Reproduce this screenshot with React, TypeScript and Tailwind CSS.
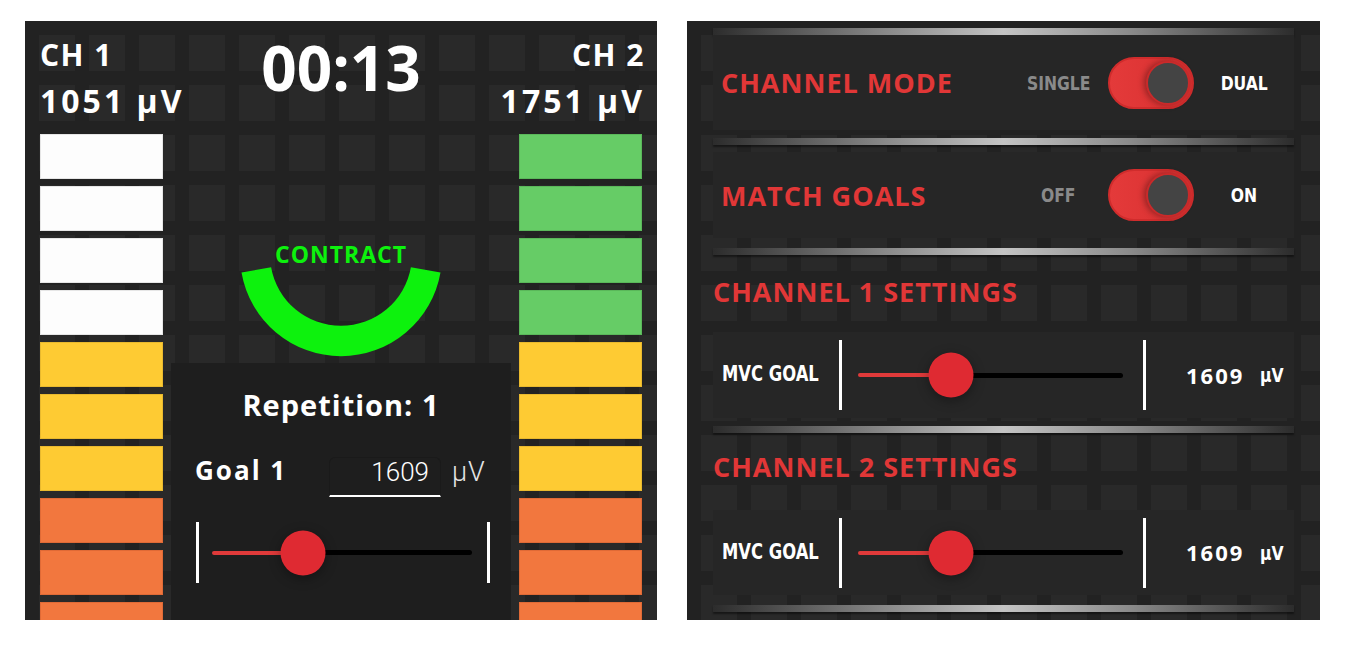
import React from 'react'

const pattern =
  'bg-[#222] bg-[linear-gradient(90deg,#222_14px,transparent_14px),linear-gradient(#222_14px,#292929_14px)] bg-[length:50px_50px]'

const futura = "font-['Open_Sans',sans-serif] font-bold"
const narrow = "inline-block whitespace-nowrap font-['DejaVu_Sans',sans-serif] font-bold scale-x-[0.78]"

const leftBars = [
  'bg-[#fdfdfd] border-[#e6e6e6]',
  'bg-[#fdfdfd] border-[#e6e6e6]',
  'bg-[#fdfdfd] border-[#e6e6e6]',
  'bg-[#fdfdfd] border-[#e6e6e6]',
  'bg-[#fecb33] border-[#e9b92e]',
  'bg-[#fecb33] border-[#e9b92e]',
  'bg-[#fecb33] border-[#e9b92e]',
  'bg-[#f2773e] border-[#e06a36]',
  'bg-[#f2773e] border-[#e06a36]',
  'bg-[#f2773e] border-[#e06a36]',
]

const rightBars = [
  'bg-[#66cc66] border-[#5ab85a]',
  'bg-[#66cc66] border-[#5ab85a]',
  'bg-[#66cc66] border-[#5ab85a]',
  'bg-[#66cc66] border-[#5ab85a]',
  'bg-[#fecb33] border-[#e9b92e]',
  'bg-[#fecb33] border-[#e9b92e]',
  'bg-[#fecb33] border-[#e9b92e]',
  'bg-[#f2773e] border-[#e06a36]',
  'bg-[#f2773e] border-[#e06a36]',
  'bg-[#f2773e] border-[#e06a36]',
]

function Bars({ colors }: { colors: string[] }) {
  return (
    <div className="flex w-[123px] shrink-0 flex-col gap-[7px]">
      {colors.map((c, i) => (
        <div key={i} className={`h-[45px] shrink-0 border ${c}`} />
      ))}
    </div>
  )
}

function Track({ className }: { className: string }) {
  return (
    <div className={`relative flex items-center ${className}`}>
      <div className="h-[4px] w-[35%] rounded-l-full bg-[#e03a3a]" />
      <div className="h-[5px] flex-1 rounded-r-full bg-black" />
      <div className="absolute left-[35%] top-1/2 h-[45px] w-[45px] -translate-x-1/2 -translate-y-1/2 rounded-full bg-[#df2a32] shadow-[0_3px_12px_rgba(0,0,0,0.35)]" />
    </div>
  )
}

function Separator() {
  return (
    <div className="h-[7px] shrink-0 bg-[linear-gradient(90deg,#2c2c2c,#8a8a8a_30%,#c4c4c4_50%,#8a8a8a_72%,#2c2c2c)] shadow-[0_2px_2px_rgba(0,0,0,0.45)]" />
  )
}

function Toggle() {
  return (
    <div className="mx-[10px] flex h-[52px] w-[86px] shrink-0 items-center justify-end rounded-full border-2 border-[#d02c2c] bg-[linear-gradient(90deg,#e43a3a,#d83030)] p-[2px]">
      <div className="h-[44px] w-[44px] rounded-full border-2 border-[#c92a2a] bg-[#444] shadow-[-2px_0_6px_rgba(0,0,0,0.35)]" />
    </div>
  )
}

function ToggleRow({ title, off, on, className }: { title: string; off: string; on: string; className: string }) {
  return (
    <div className={`flex items-center bg-[#262626] pl-[8px] pr-[10px] ${className}`}>
      <span className={`${futura} flex-1 text-[27px] leading-none tracking-[1px] text-[#e13737]`}>{title}</span>
      <span className="w-[80px] text-center">
        <span className={`${narrow} text-[20px] text-[#8a8a8a]`}>{off}</span>
      </span>
      <Toggle />
      <span className="w-[80px] text-center">
        <span className={`${narrow} text-[20px] text-white`}>{on}</span>
      </span>
    </div>
  )
}

function GoalRow({ className }: { className: string }) {
  return (
    <div className={`flex items-center bg-[#262626] pl-[9px] ${className}`}>
      <span className="w-[117px] shrink-0">
        <span className={`${narrow} origin-left text-[21px] text-white`}>MVC GOAL</span>
      </span>
      <div className="h-[70px] w-[3px] bg-white" />
      <Track className="ml-[16px] w-[265px]" />
      <div className="ml-[20px] h-[70px] w-[3px] bg-white" />
      <span className={`${futura} ml-[40px] text-[22px] tracking-[2px] text-white`}>1609</span>
      <span className={`${narrow} ml-[16px] origin-left text-[20px] text-white`}>µV</span>
    </div>
  )
}

export default function App() {
  return (
    <div className="flex h-[647px] w-[1345px] gap-[30px] bg-white pl-[25px] pt-[21px]">
      {/* Session panel */}
      <div className={`h-[599px] w-[632px] shrink-0 overflow-hidden px-[15px] pt-[11px] text-white ${pattern}`}>
        <div className={`${futura} grid h-[102px] grid-cols-[1fr_auto_1fr]`}>
          <div className="leading-[46px]">
            <div className="text-[30px] tracking-[1.5px]">CH 1</div>
            <div className="text-[32px] tracking-[3px]">1051 µV</div>
          </div>
          <div className="mt-[4px] text-[62px] leading-none">00:13</div>
          <div className="mr-[-3px] text-right leading-[46px]">
            <div className="text-[30px] tracking-[1.5px]">CH 2</div>
            <div className="text-[32px] tracking-[3px]">1751 µV</div>
          </div>
        </div>

        <div className="flex">
          <Bars colors={leftBars} />
          <div className="flex flex-1 flex-col items-center px-[8px]">
            <div className={`${futura} mt-[109px] text-[23px] leading-none tracking-[1px] text-[#0df20d]`}>CONTRACT</div>
            <svg width="204" height="106" viewBox="0 0 204 106" className="mt-[-15px] shrink-0">
              <path
                d="M 201.5 21.5 A 101 101 0 0 1 2.5 21.5 L 32.1 16.3 A 71 71 0 0 0 171.9 16.3 Z"
                fill="#0df20d"
              />
            </svg>
            <div className="mt-[6px] h-[300px] w-full shrink-0 bg-[#1e1e1e] pt-[27px]">
              <div className={`${futura} text-center text-[29px] leading-none tracking-[1px]`}>Repetition: 1</div>
              <div className="mt-[38px] flex items-start pl-[24px]">
                <span className={`${futura} w-[134px] text-[26px] leading-none tracking-[2px]`}>Goal 1</span>
                <div className="h-[40px] w-[112px] rounded-t-[6px] border border-b-2 border-[#1a1a1a] border-b-white pr-[11px] pt-[1px] text-right font-['Roboto',sans-serif] text-[26px] font-light leading-none">
                  1609
                </div>
                <span className="ml-[11px] pt-[2px] font-['Roboto',sans-serif] text-[27px] font-light leading-none tracking-[1px] text-[#e5e5e5]">µV</span>
              </div>
              <div className="mt-[25px] flex items-center pl-[25px]">
                <div className="h-[61px] w-[3px] bg-white" />
                <Track className="ml-[13px] w-[260px]" />
                <div className="ml-[15px] h-[61px] w-[3px] bg-white" />
              </div>
            </div>
          </div>
          <Bars colors={rightBars} />
        </div>
      </div>

      {/* Settings panel */}
      <div className={`flex h-[599px] w-[633px] shrink-0 flex-col overflow-hidden px-[26px] pt-[7px] ${pattern}`}>
        <Separator />
        <ToggleRow title="CHANNEL MODE" off="SINGLE" on="DUAL" className="h-[95px]" />
        <div className="mt-[8px]">
          <Separator />
        </div>
        <ToggleRow title="MATCH GOALS" off="OFF" on="ON" className="mt-[7px] h-[86px]" />
        <div className="mt-[10px]">
          <Separator />
        </div>
        <div className={`${futura} mt-[23px] text-[27px] leading-none tracking-[1px] text-[#e13737]`}>CHANNEL 1 SETTINGS</div>
        <GoalRow className="mt-[27px] h-[86px]" />
        <div className="mt-[8px]">
          <Separator />
        </div>
        <div className={`${futura} mt-[20px] text-[27px] leading-none tracking-[1px] text-[#e13737]`}>CHANNEL 2 SETTINGS</div>
        <GoalRow className="mt-[30px] h-[85px]" />
        <div className="mt-[10px]">
          <Separator />
        </div>
      </div>
    </div>
  )
}
